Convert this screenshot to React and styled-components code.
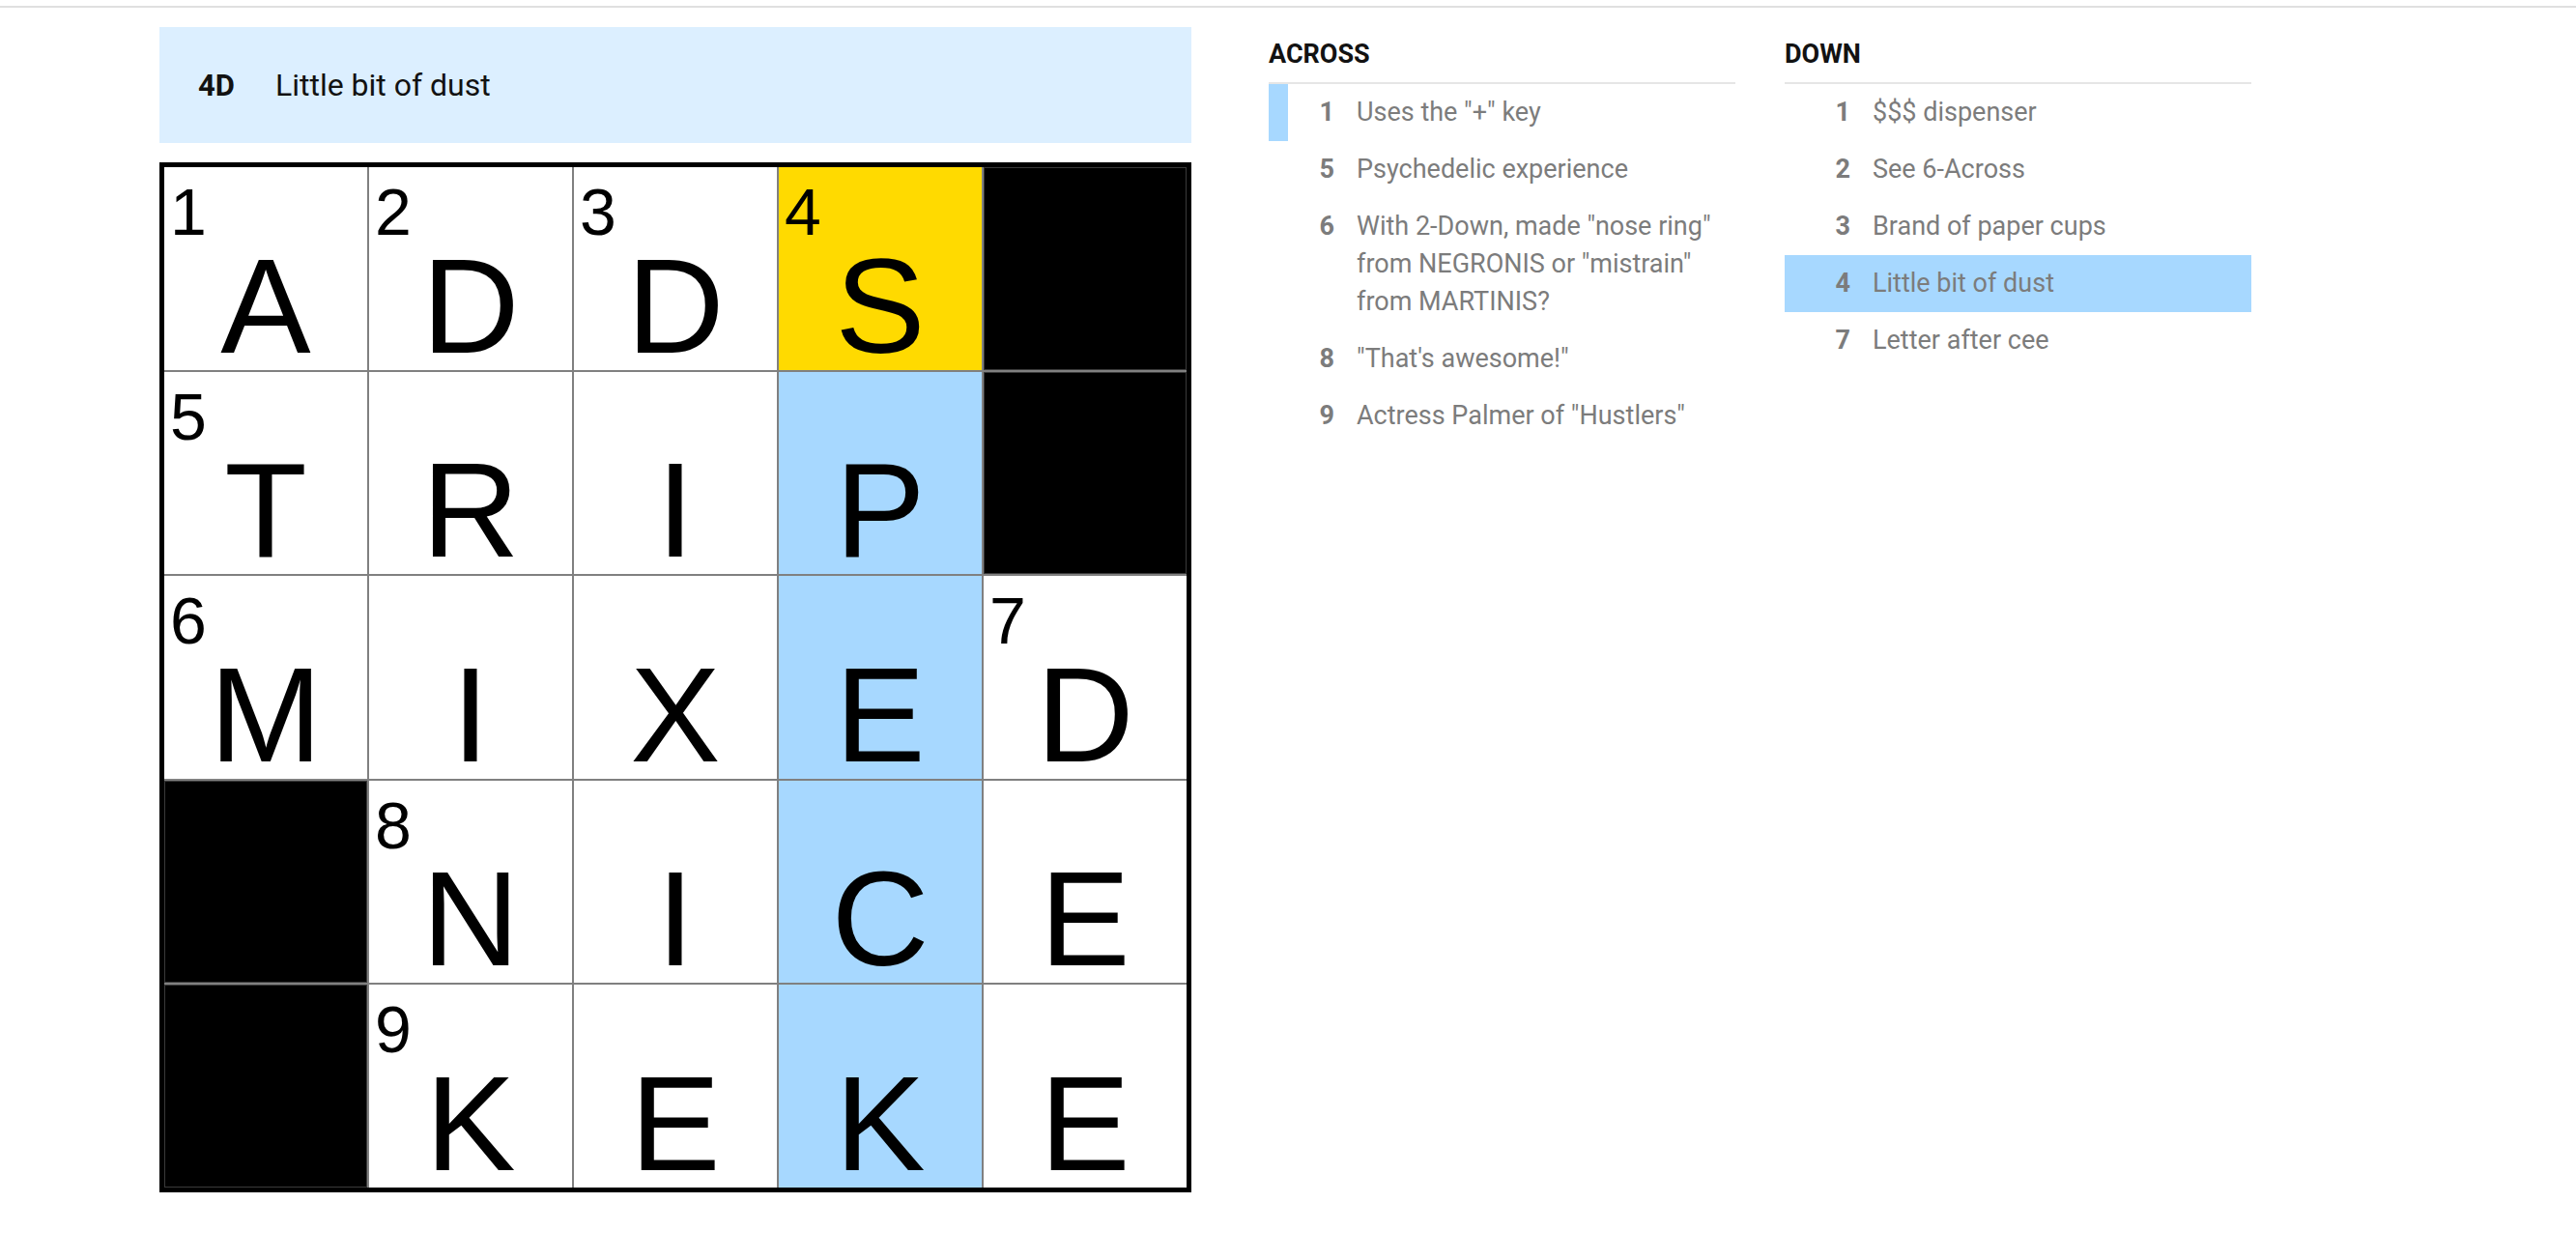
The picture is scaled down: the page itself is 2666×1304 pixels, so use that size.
import React from 'react';
import styled, { createGlobalStyle } from 'styled-components';

const GlobalStyle = createGlobalStyle`
  body {
    margin: 0;
    background: #fff;
    font-family: Roboto, "Liberation Sans", Arial, sans-serif;
    color: #121212;
  }
`;

const grid = [
  [{ n: 1, l: 'A' }, { n: 2, l: 'D' }, { n: 3, l: 'D' }, { n: 4, l: 'S', s: 'focus' }, { b: true }],
  [{ n: 5, l: 'T' }, { l: 'R' }, { l: 'I' }, { l: 'P', s: 'word' }, { b: true }],
  [{ n: 6, l: 'M' }, { l: 'I' }, { l: 'X' }, { l: 'E', s: 'word' }, { n: 7, l: 'D' }],
  [{ b: true }, { n: 8, l: 'N' }, { l: 'I' }, { l: 'C', s: 'word' }, { l: 'E' }],
  [{ b: true }, { n: 9, l: 'K' }, { l: 'E' }, { l: 'K', s: 'word' }, { l: 'E' }],
];

const across = [
  { n: 1, text: 'Uses the "+" key', marker: true },
  { n: 5, text: 'Psychedelic experience' },
  { n: 6, text: 'With 2-Down, made "nose ring" from NEGRONIS or "mistrain" from MARTINIS?' },
  { n: 8, text: '"That\'s awesome!"' },
  { n: 9, text: 'Actress Palmer of "Hustlers"' },
];

const down = [
  { n: 1, text: '$$$ dispenser' },
  { n: 2, text: 'See 6-Across' },
  { n: 3, text: 'Brand of paper cups' },
  { n: 4, text: 'Little bit of dust', active: true },
  { n: 7, text: 'Letter after cee' },
];

export default function App() {
  return (
    <>
      <GlobalStyle />
      <TopRule />
      <Main>
        <Board>
          <ClueBar>
            <BarLabel>4D</BarLabel>
            <BarText>Little bit of dust</BarText>
          </ClueBar>
          <Grid>
            {grid.flat().map((c, i) =>
              c.b ? (
                <BlockCell key={i} />
              ) : (
                <Cell key={i} $state={c.s}>
                  {c.n && <CellNum>{c.n}</CellNum>}
                  <Letter>{c.l}</Letter>
                </Cell>
              )
            )}
          </Grid>
        </Board>
        <Lists>
          <ClueList title="ACROSS" clues={across} />
          <ClueList title="DOWN" clues={down} />
        </Lists>
      </Main>
    </>
  );
}

function ClueList({ title, clues }) {
  return (
    <ListCol>
      <ListTitle>{title}</ListTitle>
      <ListItems>
        {clues.map((c) => (
          <ClueRow key={c.n} $active={c.active} $marker={c.marker}>
            <ClueNum>{c.n}</ClueNum>
            <ClueText>{c.text}</ClueText>
          </ClueRow>
        ))}
      </ListItems>
    </ListCol>
  );
}

const TopRule = styled.div`
  height: 6px;
  border-bottom: 2px solid #e0e0e0;
`;

const Main = styled.div`
  display: flex;
  align-items: flex-start;
  padding: 20px 0 0 165px;
`;

const Board = styled.div`
  width: 1068px;
  display: flex;
  flex-direction: column;
  gap: 20px;
`;

const ClueBar = styled.div`
  height: 120px;
  background: #dcefff;
  display: flex;
  align-items: center;
  padding-left: 40px;
  gap: 42px;
`;

const BarLabel = styled.span`
  font-weight: 700;
  font-size: 31px;
`;

const BarText = styled.span`
  font-size: 32px;
`;

const Grid = styled.div`
  box-sizing: border-box;
  width: 1068px;
  height: 1066px;
  border: 5px solid #000;
  background: #808080;
  display: grid;
  grid-template-columns: repeat(5, 1fr);
  grid-template-rows: repeat(5, 1fr);
  gap: 2px;
`;

const cellBg = {
  focus: '#ffda00',
  word: '#a7d8ff',
};

const Cell = styled.div`
  position: relative;
  background: ${(p) => cellBg[p.$state] || '#fff'};
  display: flex;
  align-items: flex-end;
  justify-content: center;
  padding-bottom: 3px;
  font-family: "Liberation Sans", Arial, sans-serif;
  color: #000;
`;

const BlockCell = styled.div`
  background: #000;
  box-shadow: inset 0 0 0 1px #3a3a3a;
`;

const CellNum = styled.span`
  position: absolute;
  top: 12px;
  left: 6px;
  font-size: 68px;
  line-height: 1;
`;

const Letter = styled.span`
  font-size: 140px;
  line-height: 0.9;
`;

const Lists = styled.div`
  display: flex;
  gap: 51px;
  margin-left: 80px;
`;

const ListCol = styled.div`
  width: 483px;
`;

const ListTitle = styled.div`
  font-size: 27px;
  font-weight: 700;
  line-height: 1.2;
  padding: 12px 0 13px;
  border-bottom: 2px solid #e6e6e6;
  color: #121212;
`;

const ListItems = styled.div`
  display: flex;
  flex-direction: column;
`;

const ClueRow = styled.div`
  display: flex;
  align-items: flex-start;
  padding: 10px 16px 10px 0;
  font-size: 27px;
  line-height: 39px;
  color: #7c7c7c;
  background: ${(p) => (p.$active ? '#a7d8ff' : 'transparent')};
  box-shadow: ${(p) => (p.$marker ? 'inset 20px 0 0 #a7d8ff' : 'none')};
`;

const ClueNum = styled.span`
  flex: 0 0 68px;
  text-align: right;
  font-weight: 700;
  margin-right: 23px;
`;

const ClueText = styled.span`
  flex: 1;
`;
